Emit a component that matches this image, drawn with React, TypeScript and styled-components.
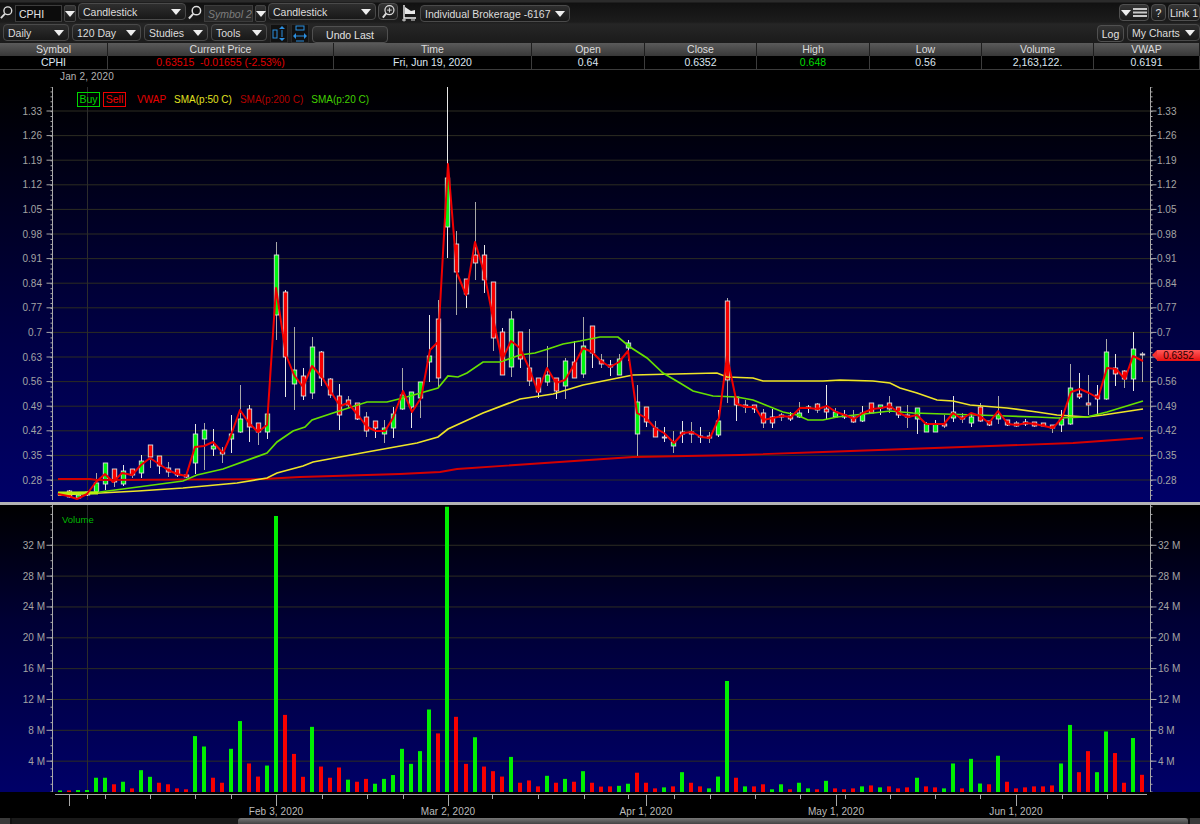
import React from 'react';
import styled, { createGlobalStyle } from 'styled-components';

const GlobalStyle = createGlobalStyle`
  html, body {
    margin: 0;
    background: #000;
  }
`

const Page = styled.div`
  width: 1200px;
  height: 824px;
  overflow: hidden;
  background: #000;
  font-family: "Liberation Sans", Arial, sans-serif;
  font-size: 10.5px;
  color: #ddd;
`

const Toolbar = styled.div`
  height: 43px;
  box-sizing: border-box;
  padding-top: 3px;
  display: flex;
  flex-direction: column;
  gap: 2px;
  background: linear-gradient(#2b2b2b 0, #2b2b2b 2px, #111 3px, #1c1c1c 22px, #262626 24px, #1b1b1b 43px);
`

const ToolRow = styled.div<{ $gap: number; $left?: number }>`
  height: 19px;
  display: flex;
  align-items: flex-start;
  gap: ${p => p.$gap}px;
  padding-left: ${p => p.$left || 0}px;
`

const Dropdown = styled.div<{ $w: number; $drop?: number }>`
  width: ${p => p.$w}px;
  height: 17px;
  flex: none;
  box-sizing: border-box;
  margin-top: ${p => p.$drop || 0}px;
  display: flex;
  align-items: center;
  justify-content: space-between;
  padding: 0 4px 0 4px;
  border: 1px solid #4a4a4a;
  border-radius: 4px;
  background: linear-gradient(#2e2e2e, #181818);
  color: #ddd;
  white-space: nowrap;
`

const Arrow = styled.span`
  width: 0;
  height: 0;
  flex: none;
  border-left: 5px solid transparent;
  border-right: 5px solid transparent;
  border-top: 6px solid #eee;
`

const SymbolInput = styled.div<{ $w: number; $ghost?: boolean }>`
  width: ${p => p.$w}px;
  height: 17px;
  flex: none;
  box-sizing: border-box;
  margin-top: 2px;
  padding: 0 3px;
  display: flex;
  align-items: center;
  background: ${p => (p.$ghost ? '#2a2a2a' : '#0c0c0c')};
  border: 1px solid #3c3c3c;
  color: ${p => (p.$ghost ? '#7d7d7d' : '#e4e4e4')};
  font-style: ${p => (p.$ghost ? 'italic' : 'normal')};
  white-space: nowrap;
  overflow: hidden;
`

const ArrowButton = styled.div<{ $w: number }>`
  width: ${p => p.$w}px;
  height: 17px;
  flex: none;
  margin-top: 2px;
  box-sizing: border-box;
  display: flex;
  align-items: center;
  justify-content: center;
  border: 1px solid #444;
  border-radius: 2px;
  background: linear-gradient(#333, #181818);
`

const IconSlot = styled.div<{ $w: number }>`
  width: ${p => p.$w}px;
  height: 19px;
  flex: none;
  display: flex;
  align-items: center;
  justify-content: center;
`

const Button = styled.div<{ $w: number; $drop?: number }>`
  width: ${p => p.$w}px;
  height: 17px;
  flex: none;
  box-sizing: border-box;
  margin-top: ${p => p.$drop || 0}px;
  display: flex;
  align-items: center;
  justify-content: center;
  gap: 2px;
  border: 1px solid #505050;
  border-radius: 4px;
  background: linear-gradient(#343434, #1b1b1b);
  color: #e2e2e2;
  white-space: nowrap;
`

const Spacer = styled.div`
  flex: 1;
`

const QuoteHead = styled.div`
  display: grid;
  grid-template-columns: 108px 226px 198px 113px 112px 113px 112px 112px 1fr;
  height: 13px;
  background: linear-gradient(#5a5a5a, #383838);
  color: #dcdcdc;
`

const QuoteRow = styled.div`
  display: grid;
  grid-template-columns: 108px 226px 198px 113px 112px 113px 112px 112px 1fr;
  height: 14px;
  background: #000;
  border-bottom: 1px solid #3c3c3c;
  box-sizing: border-box;
`

const HeadCell = styled.div`
  text-align: center;
  line-height: 13px;
  border-right: 1px solid #1e1e1e;
`

const Cell = styled.div<{ $color?: string }>`
  text-align: center;
  line-height: 13px;
  border-right: 1px solid #3c3c3c;
  color: ${p => p.$color || '#dde6f0'};
  white-space: pre;
`

const DateStrip = styled.div`
  height: 17px;
  padding-left: 60px;
  line-height: 14px;
  color: #b4b4b4;
  font-size: 10px;
  letter-spacing: 0.15px;
  background: #000;
`

const PricePanel = styled.div`
  position: relative;
  height: 415px;
  background: linear-gradient(#000 0%, #000022 30%, #000046 62%, #000068 100%);
`

const VolumePanel = styled.div`
  position: relative;
  height: 287px;
  background: linear-gradient(#000 0%, #000034 40%, #000068 100%);
`

const Divider = styled.div`
  height: 3px;
  background: #b4b4b4;
`

const Plot = styled.svg`
  display: block;
`

const Legend = styled.div`
  position: absolute;
  left: 77px;
  top: 5px;
  display: flex;
  align-items: center;
  font-size: 10px;
`

const TradeBox = styled.span<{ $color: string; $w: number }>`
  width: ${p => p.$w}px;
  height: 15px;
  box-sizing: border-box;
  margin-right: 3px;
  border: 1px solid ${p => p.$color};
  color: ${p => p.$color};
  text-align: center;
  line-height: 13px;
  font-size: 10.5px;
`

const LegendItem = styled.span<{ $color: string; $left: number }>`
  color: ${p => p.$color};
  margin-left: ${p => p.$left}px;
  white-space: nowrap;
`

const PriceTag = styled.div`
  position: absolute;
  left: 1157px;
  top: 263px;
  width: 43px;
  height: 11px;
  background: linear-gradient(#ff5a5a, #e81010);
  color: #2a0000;
  font-size: 10px;
  line-height: 11px;
  text-align: center;
  &::before {
    content: '';
    position: absolute;
    left: -5px;
    top: 0;
    border-top: 5.5px solid transparent;
    border-bottom: 5.5px solid transparent;
    border-right: 5px solid #f03030;
  }
`

const VolumeTitle = styled.div`
  position: absolute;
  left: 62px;
  top: 9px;
  color: #00b800;
  font-size: 9.5px;
`

const ScrollBar = styled.div`
  height: 6px;
  display: flex;
  gap: 2px;
  background: #111;
`

const ScrollEnd = styled.div`
  width: 10px;
  background: #3a3a3a;
`

const ScrollTrack = styled.div`
  flex: 1;
  padding-left: 226px;
  display: flex;
  background: #1a1a1a;
`

const ScrollThumb = styled.div`
  flex: 1;
  border-radius: 3px 3px 0 0;
  background: linear-gradient(#777, #444);
`

const candleX = (i: number) => 59.6 + 9.02 * i

// kind, high, body top, body bottom, low (page pixels, read off the picture)
type Candle = ['g' | 'r', number, number, number, number]
const candles: Candle[] = [
  ['r', 492, 493, 495, 496], ['r', 490, 491, 497, 498], ['g', 494, 495, 498, 499], ['r', 491, 492, 495, 496],
  ['g', 473, 483, 492, 493], ['g', 463, 463, 484, 490], ['r', 469, 469, 482, 487], ['g', 465, 471, 484, 486],
  ['r', 469, 469, 475, 478], ['g', 455, 461, 473, 478], ['r', 445, 445, 457, 468], ['r', 456, 456, 466, 474],
  ['r', 462, 468, 472, 477], ['r', 469, 469, 475, 477], ['r', 475, 475, 477, 478], ['g', 424, 434, 463, 474],
  ['g', 423, 430, 439, 470], ['g', 429, 446, 449, 456], ['r', 447, 452, 454, 463], ['g', 415, 434, 439, 453],
  ['g', 385, 419, 432, 433], ['r', 405, 409, 427, 442], ['r', 423, 423, 432, 445], ['g', 414, 414, 432, 439],
  ['g', 242, 255, 315, 340], ['r', 290, 292, 357, 397], ['g', 327, 370, 384, 410], ['r', 368, 376, 396, 400],
  ['g', 337, 347, 393, 399], ['r', 351, 352, 378, 386], ['r', 378, 379, 395, 398], ['r', 384, 396, 415, 430],
  ['r', 396, 400, 405, 408], ['r', 403, 403, 419, 420], ['r', 412, 417, 431, 437], ['r', 421, 421, 428, 438],
  ['g', 420, 428, 434, 443], ['g', 407, 414, 428, 438], ['g', 368, 395, 409, 410], ['g', 392, 392, 407, 428],
  ['g', 382, 382, 398, 418], ['g', 315, 356, 362, 382], ['r', 300, 319, 378, 387], ['g', 87, 178, 227, 258],
  ['r', 231, 244, 272, 315], ['r', 279, 279, 294, 308], ['r', 202, 255, 263, 280], ['r', 245, 255, 280, 293],
  ['r', 282, 282, 338, 351], ['r', 328, 332, 375, 375], ['g', 311, 319, 367, 377], ['r', 332, 332, 359, 368],
  ['r', 329, 368, 381, 386], ['r', 378, 378, 392, 398], ['g', 346, 375, 382, 386], ['r', 378, 378, 391, 399],
  ['g', 358, 361, 386, 399], ['r', 341, 362, 378, 378], ['g', 317, 346, 374, 378], ['r', 326, 326, 353, 368],
  ['r', 354, 360, 364, 368], ['r', 360, 365, 367, 376], ['g', 354, 359, 375, 375], ['g', 340, 343, 348, 361],
  ['g', 385, 402, 434, 456], ['r', 407, 407, 422, 427], ['r', 421, 428, 437, 437], ['r', 427, 437, 438, 442],
  ['g', 431, 442, 446, 453], ['r', 421, 432, 434, 443], ['r', 422, 432, 434, 443], ['r', 427, 436, 437, 443],
  ['r', 432, 436, 438, 443], ['g', 410, 421, 435, 437], ['r', 298, 301, 380, 403], ['r', 397, 397, 405, 421],
  ['r', 400, 405, 407, 413], ['r', 405, 405, 409, 413], ['r', 409, 413, 423, 428], ['r', 409, 417, 423, 428],
  ['r', 413, 415, 417, 421], ['r', 412, 416, 419, 421], ['g', 402, 413, 417, 418], ['r', 405, 407, 408, 413],
  ['r', 403, 404, 410, 413], ['r', 385, 409, 412, 420], ['g', 408, 412, 417, 418], ['r', 410, 415, 417, 419],
  ['r', 410, 417, 422, 423], ['g', 406, 413, 421, 422], ['r', 403, 403, 413, 413], ['g', 405, 405, 408, 415],
  ['r', 396, 403, 409, 413], ['r', 407, 407, 415, 418], ['r', 405, 415, 417, 428], ['g', 408, 408, 419, 434],
  ['g', 422, 424, 432, 432], ['g', 420, 424, 432, 432], ['r', 415, 424, 426, 428], ['g', 396, 412, 418, 422],
  ['r', 413, 417, 419, 423], ['g', 413, 417, 423, 427], ['r', 403, 407, 421, 422], ['r', 421, 421, 425, 426],
  ['g', 396, 415, 419, 424], ['r', 420, 420, 425, 426], ['r', 421, 423, 426, 427], ['r', 419, 422, 424, 426],
  ['r', 422, 422, 426, 427], ['r', 423, 423, 426, 427], ['r', 425, 425, 428, 433], ['g', 410, 419, 425, 432],
  ['g', 364, 388, 424, 425], ['r', 373, 394, 397, 399], ['r', 375, 403, 405, 415], ['r', 385, 395, 399, 415],
  ['g', 339, 352, 399, 400], ['r', 354, 368, 374, 386], ['r', 370, 371, 379, 388], ['g', 332, 349, 379, 391],
  ['r', 352, 354, 355, 382],
]

const vwapLine = '58,494 68,496 77,499 87,494 96,482 105,474 113,482 122,473 132,475 141,465 150,458 159,464 168,470 177,474 186,476 195,447 204,446 213,442 223,453 231,435 240,410 249,423 258,432 267,425 276,288 286,355 294,375 303,387 312,366 322,377 331,392 340,406 348,403 358,415 367,427 376,431 385,431 393,418 403,391 412,412 421,398 430,350 438,342 448,164 457,273 466,295 475,242 484,272 493,318 502,360 511,341 520,348 529,368 538,392 547,368 556,383 565,380 574,365 583,348 592,352 601,361 610,367 619,362 628,351 637,413 646,418 655,428 664,433 674,443 683,433 692,432 701,437 710,438 719,418 727,356 737,404 746,407 755,407 763,420 773,418 782,416 791,417 800,408 809,408 818,409 827,406 836,412 845,415 854,419 863,413 872,409 881,408 890,406 899,413 908,417 917,415 926,424 935,424 944,424 953,413 962,419 971,413 980,416 989,423 998,411 1008,424 1017,425 1026,423 1035,424 1044,426 1053,428 1062,418 1071,392 1080,389 1089,393 1098,398 1107,368 1116,369 1125,379 1133,356 1143,361'
const sma20Line = '58,493 100,492 138,487 183,481 197,475 223,469 267,453 277,442 293,431 305,427 312,420 333,413 367,402 387,402 403,398 438,388 448,376 458,377 467,373 483,362 500,362 520,355 535,353 548,349 563,344 580,341 600,337 618,337 630,347 647,358 663,373 680,383 693,391 713,396 737,397 753,400 783,412 797,415 808,420 823,420 837,417 873,413 890,411 913,413 1007,416 1037,417 1057,418 1087,417 1107,412 1143,401'
const sma50Line = '58,495 100,493 138,491 183,488 237,483 267,478 277,473 303,466 313,462 367,452 417,443 438,437 448,429 483,413 520,399 553,394 583,385 633,375 717,373 727,377 753,378 763,381 823,381 840,380 873,381 890,383 900,388 917,393 937,400 953,401 970,405 1007,408 1037,412 1057,415 1087,417 1103,415 1143,409'
const sma200Line = '58,479 90,479 97,480 263,479 300,477 400,474 440,472 457,469 633,457 740,455 823,452 1073,443 1143,438'

const priceLabels = ['1.33', '1.26', '1.19', '1.12', '1.05', '0.98', '0.91', '0.84', '0.77', '0.7', '0.63', '0.56', '0.49', '0.42', '0.35', '0.28']
const volumeLabels = [32, 28, 24, 20, 16, 12, 8, 4]

// millions, negative for a down day
const volumes = [
  .2, -.2, .25, .25, 1.85, 1.85, -1, 1.33, -.47, 2.83, 1.97, -1.2, -1, -.47, -.35, 7.25, 5.9, -1.85, -1.2, 5.6,
  9.2, -3.7, -2, 3.43, 35.8, -10, -4.94, -1.97, 8.45, -3.3, -1.85, -3.18, 1.6, -1.33, -1.7, 1.07, 1.7, 2.2, 5.6, 3.65,
  5.3, 10.7, -7.6, 37, -9.75, -3.65, 7.1, -3.3, -2.7, -2, 4.55, -1.2, -1.5, -.73, 2.1, -1.2, 1.7, -1.33, 2.7, -1.2,
  -.7, -.73, .8, 1.07, -2.5, -1.2, -.47, .6, -.73, 2.57, -1.2, -.73, .47, 2, 14.4, -1.85, .73, -.73, -1, .35,
  1, -.35, 1.2, .47, -.35, 1.45, -.47, -.35, -.47, .73, -.85, .6, -.73, -.47, -.6, 1.85, -.73, -.6, .47, 3.7,
  -.47, 4.3, 1.1, -1, 4.7, -1.33, -.47, -.6, -.73, -.73, -.85, 3.7, 8.7, -2.57, -5.3, 2.57, 7.85, -5.05, -1.2, 7,
  -2.23,
]

const timeTicks: [number, boolean][] = [
  [69, true], [87, false], [105, false], [150, false], [195, false], [231, false], [276, true], [322, false], [367, false],
  [403, false], [448, true], [492, false], [538, false], [584, false], [628, false], [646, true], [674, false], [710, false],
  [755, false], [800, false], [836, true], [845, false], [890, false], [935, false], [980, false], [1016, true], [1062, false], [1107, false],
]
const timeLabels: [string, number][] = [['Feb 3, 2020', 276], ['Mar 2, 2020', 448], ['Apr 1, 2020', 646], ['May 1, 2020', 836], ['Jun 1, 2020', 1016]]

const GRID = '#2c2c22'
const AXIS = '#a8a8a8'
const LEFT_AXIS = 52.5
const RIGHT_AXIS = 1150.5

const priceY = (k: number) => 111 + 24.6 * k
const volY = (m: number) => 792 - 7.71 * m

function Magnifier() {
  return (
    <svg width="15" height="17" viewBox="0 0 15 17">
      <circle cx="9" cy="6.5" r="4.5" fill="none" stroke="#ddd" strokeWidth="1.6" />
      <path d="M5.6 10 L1 15" stroke="#ddd" strokeWidth="2.2" />
    </svg>
  )
}

function ZoomIcon() {
  return (
    <svg width="15" height="15" viewBox="0 0 15 16">
      <circle cx="8.5" cy="6.5" r="4.8" fill="none" stroke="#ddd" strokeWidth="1.3" />
      <path d="M8.5 4 V9 M6 6.5 H11" stroke="#ddd" strokeWidth="1" />
      <path d="M5 10 L1.5 14.5" stroke="#ddd" strokeWidth="2" />
    </svg>
  )
}

function FlagIcon() {
  return (
    <svg width="16" height="18" viewBox="0 0 16 18">
      <path d="M3 1 V14 H15" fill="none" stroke="#eee" strokeWidth="1.4" />
      <path d="M4 3 L10 7 L14 6 L14 10 L4 10 Z" fill="#e8e8e8" />
      <path d="M1 16 H5 M3 14.5 V17.5 M10 16 H14" stroke="#ddd" strokeWidth="1" />
    </svg>
  )
}

function FitIcon() {
  return (
    <svg width="18" height="19" viewBox="0 0 18 19">
      <rect x="0.5" y="0.5" width="17" height="18" fill="#111" stroke="#2a2a2a" />
      <rect x="3" y="6" width="4" height="8" fill="none" stroke="#2b8fe0" />
      <path d="M12 2 L15 5 H9 Z M12 17 L15 14 H9 Z" fill="#2b8fe0" />
      <path d="M12 6 V13" stroke="#2b8fe0" />
    </svg>
  )
}

function StretchIcon() {
  return (
    <svg width="18" height="19" viewBox="0 0 18 19">
      <rect x="0.5" y="0.5" width="17" height="18" fill="#111" stroke="#2a2a2a" />
      <rect x="5" y="2" width="8" height="4" fill="none" stroke="#2b8fe0" />
      <path d="M2 12 L5 9 V15 Z M16 12 L13 9 V15 Z" fill="#2b8fe0" />
      <path d="M5 12 H13 M5 17 H13" stroke="#2b8fe0" />
    </svg>
  )
}

function MenuBars() {
  return (
    <svg width="14" height="9" viewBox="0 0 14 9">
      <path d="M0 1 H14 M0 4.5 H14 M0 8 H14" stroke="#c8c8c8" strokeWidth="2" />
    </svg>
  )
}

function PriceChart() {
  const minor: number[] = []
  for (let y = 87; y < 500; y += 4.92) minor.push(y)
  return (
    <Plot width="1200" height="415" viewBox="0 87 1200 415">
      {priceLabels.map((_, k) => (
        <line key={k} x1={LEFT_AXIS} x2={RIGHT_AXIS} y1={priceY(k)} y2={priceY(k)} stroke={GRID} />
      ))}
      <line x1="87.5" x2="87.5" y1="87" y2="500" stroke="#2c2c2c" />
      <line x1={LEFT_AXIS} x2={LEFT_AXIS} y1="87" y2="500" stroke={AXIS} />
      <line x1={RIGHT_AXIS} x2={RIGHT_AXIS} y1="87" y2="500" stroke={AXIS} />
      {minor.map(y => (
        <g key={y} stroke={AXIS}>
          <line x1={LEFT_AXIS - 2} x2={LEFT_AXIS} y1={y} y2={y} />
          <line x1={RIGHT_AXIS} x2={RIGHT_AXIS + 2} y1={y} y2={y} />
        </g>
      ))}
      {priceLabels.map((label, k) => (
        <g key={label}>
          <line x1={LEFT_AXIS - 6} x2={LEFT_AXIS} y1={priceY(k)} y2={priceY(k)} stroke={AXIS} />
          <line x1={RIGHT_AXIS} x2={RIGHT_AXIS + 6} y1={priceY(k)} y2={priceY(k)} stroke={AXIS} />
          <text x="42" y={priceY(k) + 3.5} textAnchor="end" fill="#a4a4a4" fontSize="10">{label}</text>
          {label !== '0.63' && <text x="1157" y={priceY(k) + 3.5} fill="#a4a4a4" fontSize="10">{label}</text>}
        </g>
      ))}
      {candles.map(([kind, high, top, bottom, low], i) => {
        const x = Math.round(candleX(i)) + 0.5
        return (
          <g key={i}>
            <line x1={x} x2={x} y1={high} y2={low} stroke={i % 2 ? '#e8e8e8' : '#a8a8a8'} />
            <rect x={x - 2.2} y={top} width="4.4" height={Math.max(bottom - top, 1)} fill={kind === 'g' ? '#00f810' : '#f80000'} stroke="#dcdcdc" strokeWidth="0.9" />
          </g>
        )
      })}
      <polyline points={sma200Line} fill="none" stroke="#d40000" strokeWidth="1.8" />
      <polyline points={sma50Line} fill="none" stroke="#eee428" strokeWidth="1.7" />
      <polyline points={sma20Line} fill="none" stroke="#66e000" strokeWidth="1.7" />
      <polyline points="58,493 98,493" fill="none" stroke="#b8f010" strokeWidth="3" />
      <polyline points={vwapLine} fill="none" stroke="#f00000" strokeWidth="2" strokeLinejoin="round" />
    </Plot>
  )
}

function VolumeChart() {
  const minor: number[] = []
  for (let m = 0; m <= 37; m++) minor.push(volY(m))
  return (
    <Plot width="1200" height="287" viewBox="0 505 1200 287">
      {volumeLabels.map(m => (
        <line key={m} x1={LEFT_AXIS} x2={RIGHT_AXIS} y1={volY(m)} y2={volY(m)} stroke={GRID} />
      ))}
      <line x1="87.5" x2="87.5" y1="505" y2="792" stroke="#2c2c2c" />
      <line x1={LEFT_AXIS} x2={LEFT_AXIS} y1="505" y2="792" stroke={AXIS} />
      <line x1={RIGHT_AXIS} x2={RIGHT_AXIS} y1="505" y2="792" stroke={AXIS} />
      {minor.map(y => (
        <g key={y} stroke={AXIS}>
          <line x1={LEFT_AXIS - 2} x2={LEFT_AXIS} y1={y} y2={y} />
          <line x1={RIGHT_AXIS} x2={RIGHT_AXIS + 2} y1={y} y2={y} />
        </g>
      ))}
      {volumeLabels.map(m => (
        <g key={m}>
          <line x1={LEFT_AXIS - 6} x2={LEFT_AXIS} y1={volY(m)} y2={volY(m)} stroke={AXIS} />
          <line x1={RIGHT_AXIS} x2={RIGHT_AXIS + 6} y1={volY(m)} y2={volY(m)} stroke={AXIS} />
          <text x="45" y={volY(m) + 3.5} textAnchor="end" fill="#a4a4a4" fontSize="10">{m} M</text>
          <text x="1158" y={volY(m) + 3.5} fill="#a4a4a4" fontSize="10">{m} M</text>
        </g>
      ))}
      {volumes.map((v, i) => {
        const h = Math.abs(v) * 7.71
        return <rect key={i} x={Math.round(candleX(i)) - 2} y={792 - h} width="4" height={h} fill={v > 0 ? '#00f000' : '#f80000'} />
      })}
    </Plot>
  )
}

function TimeAxis() {
  return (
    <Plot width="1200" height="26" viewBox="0 792 1200 26">
      <line x1="55" x2="1147" y1="794.5" y2="794.5" stroke="#a8a8a8" />
      {timeTicks.map(([x, long]) => (
        <line key={x} x1={x + 0.5} x2={x + 0.5} y1="795" y2={long ? 806 : 799} stroke="#a8a8a8" />
      ))}
      {timeLabels.map(([label, x]) => (
        <text key={label} x={x} y="815" textAnchor="middle" fill="#bcbcbc" fontSize="10" letterSpacing="0.1">{label}</text>
      ))}
    </Plot>
  )
}

function App() {
  return (
    <Page>
      <GlobalStyle />
      <Toolbar>
        <ToolRow $gap={2}>
          <IconSlot $w={13}><Magnifier /></IconSlot>
          <SymbolInput $w={47}>CPHI</SymbolInput>
          <ArrowButton $w={12}><Arrow /></ArrowButton>
          <Dropdown $w={108}>Candlestick<Arrow /></Dropdown>
          <IconSlot $w={14}><Magnifier /></IconSlot>
          <SymbolInput $w={49} $ghost>Symbol 2</SymbolInput>
          <ArrowButton $w={11}><Arrow /></ArrowButton>
          <Dropdown $w={108}>Candlestick<Arrow /></Dropdown>
          <Button $w={20}><ZoomIcon /></Button>
          <IconSlot $w={18}><FlagIcon /></IconSlot>
          <Dropdown $w={150} $drop={2}>Individual Brokerage -6167<Arrow /></Dropdown>
          <Spacer />
          <Button $w={30} $drop={1}><Arrow /><MenuBars /></Button>
          <Button $w={15} $drop={1}>?</Button>
          <Button $w={32} $drop={1}>Link 1</Button>
        </ToolRow>
        <ToolRow $gap={3} $left={3}>
          <Dropdown $w={66}>Daily<Arrow /></Dropdown>
          <Dropdown $w={69}>120 Day<Arrow /></Dropdown>
          <Dropdown $w={64}>Studies<Arrow /></Dropdown>
          <Dropdown $w={56}>Tools<Arrow /></Dropdown>
          <IconSlot $w={18}><FitIcon /></IconSlot>
          <IconSlot $w={18}><StretchIcon /></IconSlot>
          <Button $w={76} $drop={2}>Undo Last</Button>
          <Spacer />
          <Button $w={27} $drop={1}>Log</Button>
          <Dropdown $w={73}>My Charts<Arrow /></Dropdown>
        </ToolRow>
      </Toolbar>
      <QuoteHead>
        {['Symbol', 'Current Price', 'Time', 'Open', 'Close', 'High', 'Low', 'Volume', 'VWAP'].map(h => (
          <HeadCell key={h}>{h}</HeadCell>
        ))}
      </QuoteHead>
      <QuoteRow>
        <Cell>CPHI</Cell>
        <Cell $color="#e00000">{'0.63515  -0.01655 (-2.53%)'}</Cell>
        <Cell>Fri, Jun 19, 2020</Cell>
        <Cell>0.64</Cell>
        <Cell>0.6352</Cell>
        <Cell $color="#00dc00">0.648</Cell>
        <Cell>0.56</Cell>
        <Cell>2,163,122.</Cell>
        <Cell>0.6191</Cell>
      </QuoteRow>
      <DateStrip>Jan 2, 2020</DateStrip>
      <PricePanel>
        <PriceChart />
        <Legend>
          <TradeBox $color="#00d800" $w={23}>Buy</TradeBox>
          <TradeBox $color="#f00000" $w={23}>Sell</TradeBox>
          <LegendItem $color="#e80000" $left={8}>VWAP</LegendItem>
          <LegendItem $color="#e0e020" $left={8}>SMA(p:50 C)</LegendItem>
          <LegendItem $color="#b00000" $left={8}>SMA(p:200 C)</LegendItem>
          <LegendItem $color="#40d000" $left={8}>SMA(p:20 C)</LegendItem>
        </Legend>
        <PriceTag>0.6352</PriceTag>
      </PricePanel>
      <Divider />
      <VolumePanel>
        <VolumeChart />
        <VolumeTitle>Volume</VolumeTitle>
      </VolumePanel>
      <TimeAxis />
      <ScrollBar>
        <ScrollEnd />
        <ScrollTrack><ScrollThumb /></ScrollTrack>
        <ScrollEnd />
      </ScrollBar>
    </Page>
  )
}

export default App;
